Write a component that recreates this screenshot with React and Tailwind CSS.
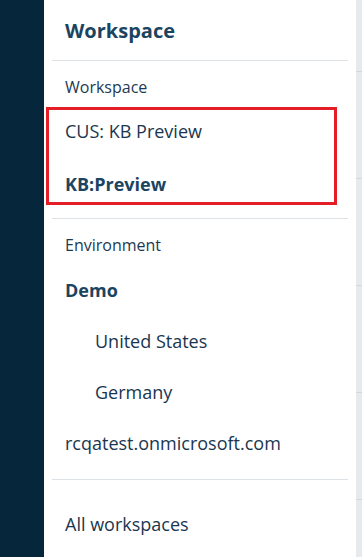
export default function App() {
  const font = { fontFamily: '"Open Sans", Lato, sans-serif' };
  return (
    <div className="flex h-[557px] w-[362px] overflow-hidden bg-white" style={font}>
      <div className="w-[44px] shrink-0 bg-[#06263c]" />
      <div className="flex w-[312px] shrink-0 flex-col bg-white">
        <div className="flex h-[60px] shrink-0 items-center pl-[21px] pt-[2px] text-[20px] font-bold text-[#1b4460]">
          Workspace
        </div>
        <div className="mx-[8px] h-px shrink-0 bg-[#dde2e6]" />
        <div className="flex h-[46px] shrink-0 items-center pl-[21px] pt-[6px] text-[16px] text-[#1c3a52]">Workspace</div>
        <div className="ml-[2px] mr-[19px] flex h-[98px] shrink-0 flex-col border-[3px] border-[#e41e26]">
          <div className="flex h-[42px] shrink-0 items-center pl-[16px] text-[18px] text-[#1a3650]">CUS: KB Preview</div>
          <div className="flex h-[50px] shrink-0 items-center pl-[16px] pt-[14px] text-[18px] font-bold text-[#1b4460]">KB:Preview</div>
        </div>
        <div className="mt-[13px] mx-[8px] h-px shrink-0 bg-[#dde2e6]" />
        <div className="flex h-[51px] shrink-0 items-center pl-[21px] text-[16px] text-[#1c3a52]">Environment</div>
        <div className="flex h-[46px] shrink-0 items-center pl-[21px] pb-[6px] text-[18px] font-bold text-[#1b4460]">Demo</div>
        <div className="flex h-[51px] shrink-0 items-center pl-[51px] text-[18px] text-[#1a3650]">United States</div>
        <div className="flex h-[51px] shrink-0 items-center pl-[51px] text-[18px] text-[#1a3650]">Germany</div>
        <div className="flex h-[51px] shrink-0 items-center pl-[21px] text-[18px] text-[#1a3650]">rcqatest.onmicrosoft.com</div>
        <div className="mt-[10px] mx-[8px] h-px shrink-0 bg-[#dde2e6]" />
        <div className="flex h-[88px] shrink-0 items-center pl-[21px] text-[18px] text-[#1a3650]">All workspaces</div>
      </div>
      <div className="flex w-[6px] shrink-0 flex-col bg-[#e6eaed]">
        <div className="h-[72px] shrink-0 border-b border-[#d3d8dc]" />
        <div className="h-[107px] shrink-0 border-b border-[#d3d8dc]" />
        <div className="h-[107px] shrink-0 border-b border-[#d3d8dc]" />
        <div className="h-[107px] shrink-0 border-b border-[#d3d8dc]" />
        <div className="h-[107px] shrink-0 border-b border-[#d3d8dc]" />
      </div>
    </div>
  );
}
